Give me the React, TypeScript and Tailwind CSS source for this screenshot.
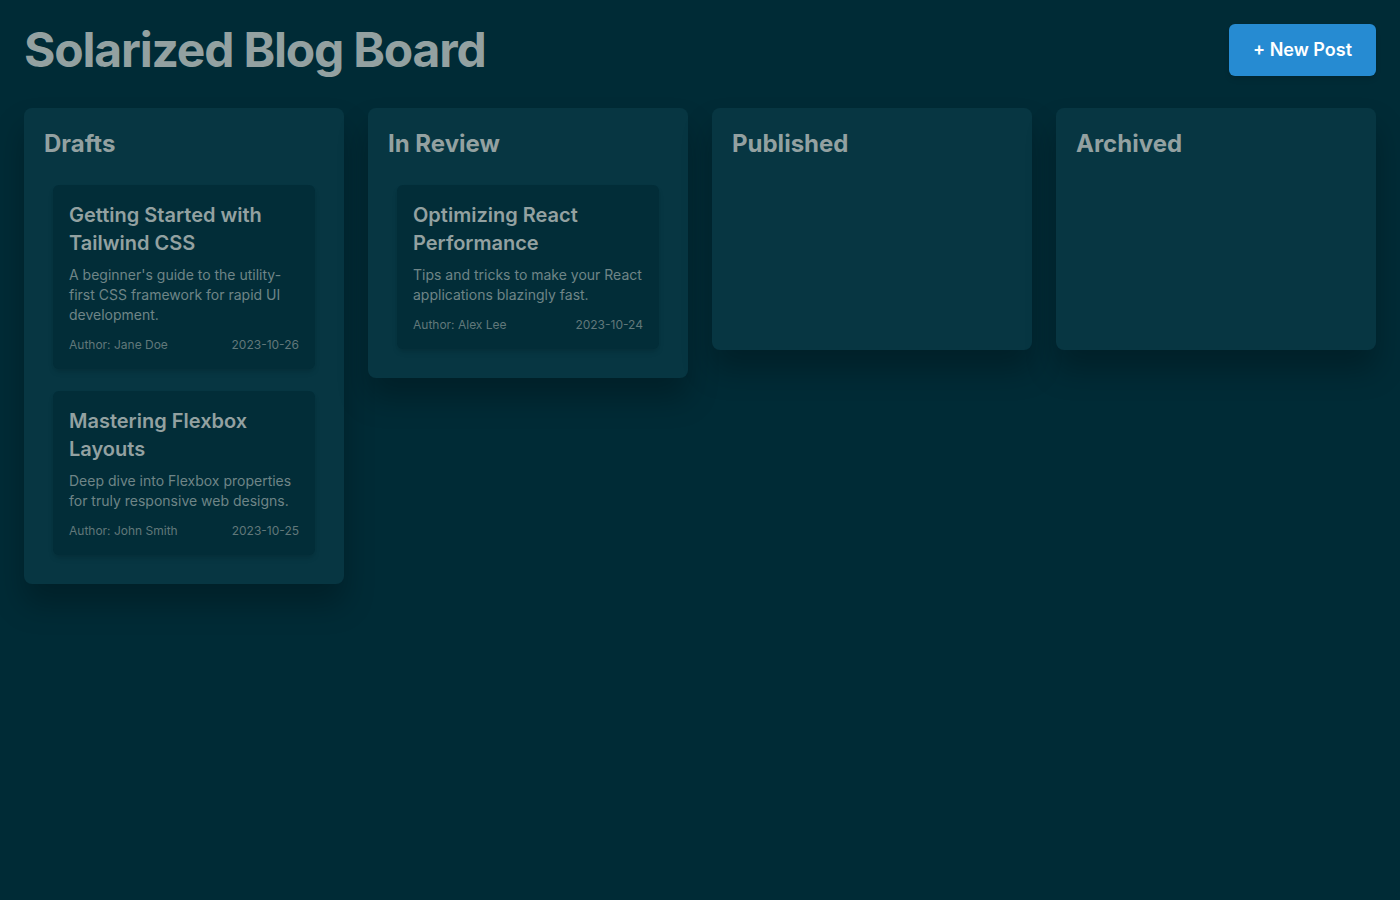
const cols = [
  { t: "Drafts", cards: [
    { h: "Getting Started with Tailwind CSS", d: "A beginner's guide to the utility-first CSS framework for rapid UI development.", a: "Jane Doe", dt: "2023-10-26" },
    { h: "Mastering Flexbox Layouts", d: "Deep dive into Flexbox properties for truly responsive web designs.", a: "John Smith", dt: "2023-10-25" },
  ]},
  { t: "In Review", cards: [
    { h: "Optimizing React Performance", d: "Tips and tricks to make your React applications blazingly fast.", a: "Alex Lee", dt: "2023-10-24" },
  ]},
  { t: "Published", cards: [] },
  { t: "Archived", cards: [] },
];

export default function App() {
  return (
    <div className="min-h-screen bg-[#002b36] p-6 text-[#93a1a1]" style={{ fontFamily: "Inter, 'Noto Sans', sans-serif" }}>
      <div className="flex items-center justify-between mb-8">
        <h1 className="text-5xl font-bold text-[#93a1a1] tracking-tight leading-[52px]">Solarized Blog Board</h1>
        <button className="h-[52px] px-6 rounded-md bg-[#268bd2] text-white text-lg font-semibold shadow-md">+ New Post</button>
      </div>
      <div className="grid grid-cols-4 gap-6 items-start">
        {cols.map((c) => (
          <div key={c.t} className="bg-[#073642] rounded-lg p-5 min-h-[242px] shadow-[0_20px_30px_rgba(0,0,0,0.25)]">
            <h2 className="text-2xl font-bold text-[#93a1a1] mb-4 leading-8">{c.t}</h2>
            <div className="flex flex-col gap-[22px] p-[9px]">
              {c.cards.map((k) => (
                <div key={k.h} className="bg-[#022d38] rounded-md p-4 shadow-md">
                  <h3 className="text-xl font-semibold leading-7 text-[#93a1a1] mb-2">{k.h}</h3>
                  <p className="text-sm leading-5 text-[#6f8587] mb-3">{k.d}</p>
                  <div className="flex justify-between text-xs text-[#61787a]">
                    <span>Author: {k.a}</span><span>{k.dt}</span>
                  </div>
                </div>
              ))}
            </div>
          </div>
        ))}
      </div>
    </div>
  );
}
